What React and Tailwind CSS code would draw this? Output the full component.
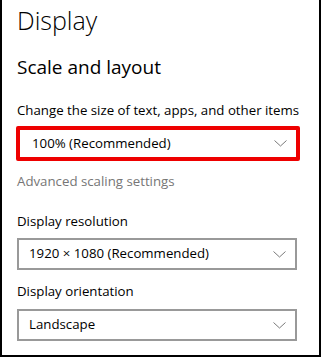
import React from 'react';

const Chevron = () => (
  <svg width="13" height="7" viewBox="0 0 13 7" fill="none" className="shrink-0">
    <path d="M0.5 0.5 L6.5 6 L12.5 0.5" stroke="#7a7a7a" strokeWidth="1" />
  </svg>
);

const Select = ({ value, highlighted }) => (
  <div
    className={
      highlighted
        ? 'flex items-center justify-between h-[35px] w-[284px] -ml-[1px] border-[4px] border-[#ee0000] rounded-[2px] pl-[12px] pr-[9px]'
        : 'flex items-center justify-between h-[32px] w-[280px] border-2 border-[#999999] pl-[10px] pr-[9px]'
    }
  >
    <span className="text-[13.25px] text-black">{value}</span>
    <Chevron />
  </div>
);

const App = () => {
  return (
    <div
      className="w-[321px] h-[357px] bg-white border-l-2 border-r-2 border-b-2 border-black pl-[15px] overflow-hidden"
      style={{ fontFamily: '"Open Sans", "Noto Sans", sans-serif' }}
    >
      <h1 className="text-[25px] font-light leading-[30px] mt-[5px] text-black">Display</h1>
      <h2 className="text-[19px] leading-[24px] mt-[20px] text-black">Scale and layout</h2>

      <p className="text-[13.25px] leading-[20px] mt-[21px] text-black">Change the size of text, apps, and other items</p>
      <div className="mt-[6px]">
        <Select value="100% (Recommended)" highlighted />
      </div>
      <p className="text-[13.25px] leading-[20px] mt-[10px] text-[#767676]">Advanced scaling settings</p>

      <p className="text-[13.25px] leading-[20px] mt-[20px] text-black">Display resolution</p>
      <div className="mt-[7px]">
        <Select value="1920 × 1080 (Recommended)" />
      </div>

      <p className="text-[13.25px] leading-[20px] mt-[11px] text-black">Display orientation</p>
      <div className="mt-[8px]">
        <Select value="Landscape" />
      </div>
    </div>
  );
};

export default App;
